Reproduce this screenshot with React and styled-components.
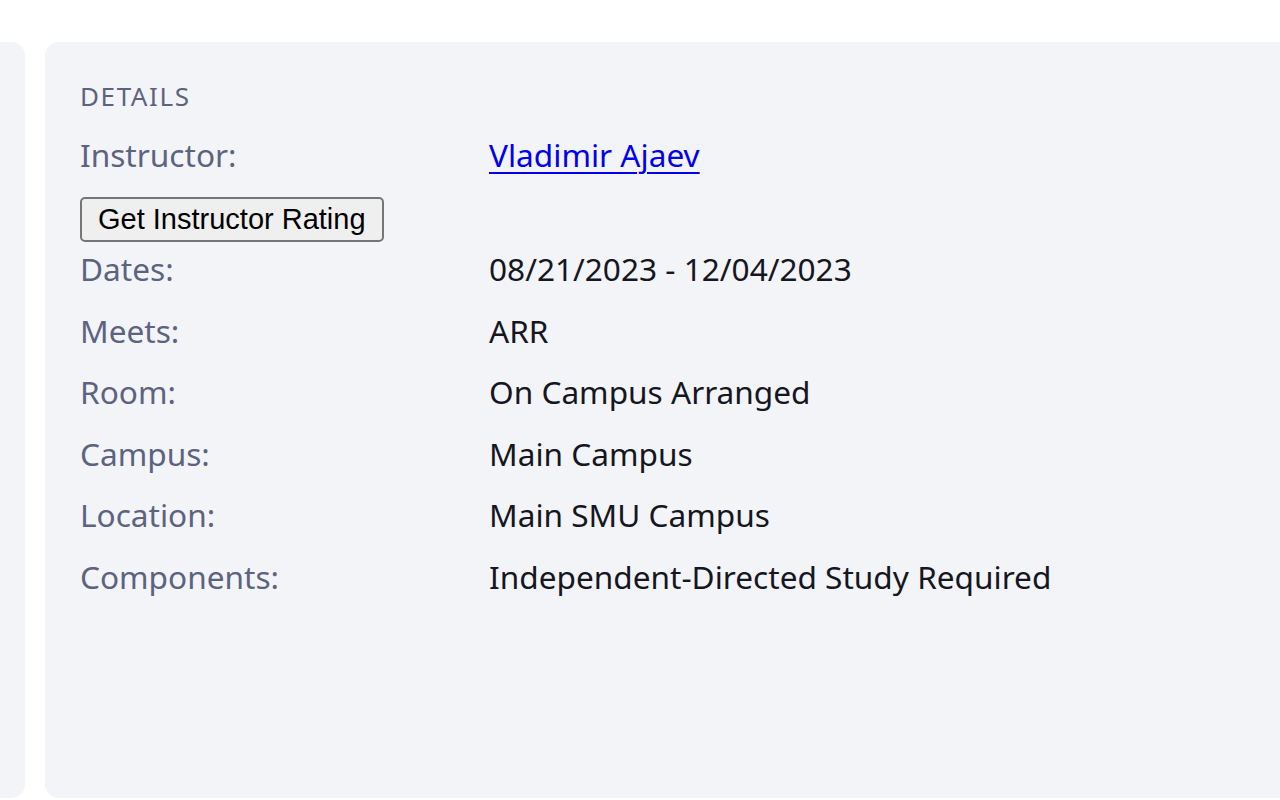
import React from 'react'
import styled, { createGlobalStyle } from 'styled-components'

const GlobalStyle = createGlobalStyle`
  html, body {
    margin: 0;
    padding: 0;
    background: #ffffff;
  }
`

const Page = styled.div`
  display: flex;
  gap: 20px;
  height: 800px;
  box-sizing: border-box;
  padding: 42px 0 2px 0;
  margin-left: -300px;
  overflow: hidden;
`

const Panel = styled.section`
  flex: ${({ grow }) => (grow ? 1 : 'none')};
  width: ${({ width }) => (width ? `${width}px` : 'auto')};
  min-width: 0;
  background: #f3f4f8;
  border-radius: 14px;
  margin-right: ${({ grow }) => (grow ? '-40px' : 0)};
  padding: 36px 35px;
  box-sizing: border-box;
  font-family: 'Noto Sans', 'Open Sans', sans-serif;
`

const Heading = styled.h3`
  margin: 0 0 20px 0;
  font-size: 26px;
  line-height: 36px;
  font-weight: 400;
  letter-spacing: 1.6px;
  color: #5b6380;
  text-transform: uppercase;
`

const Row = styled.div`
  display: grid;
  grid-template-columns: 409px 1fr;
  font-size: 31.6px;
  line-height: 42px;
  margin-bottom: ${({ tight }) => (tight ? '0' : '19.6px')};
`

const Label = styled.div`
  color: #5b6380;
`

const Value = styled.div`
  color: #15161f;
`

const InstructorLink = styled.a`
  color: #0000ee;
  text-decoration: underline;
  text-decoration-thickness: 2px;
  text-underline-offset: 5px;
`

const RatingButton = styled.button`
  align-self: flex-start;
  margin: 21px 0 6px 0;
  height: 45px;
  padding: 0 16px;
  font-family: Arial, 'Liberation Sans', sans-serif;
  font-size: 29px;
  color: #000;
  background: #efefef;
  border: 2px solid #767676;
  border-radius: 5px;
`

const Body = styled.div`
  display: flex;
  flex-direction: column;
`

const details = [
  ['Dates:', '08/21/2023 - 12/04/2023'],
  ['Meets:', 'ARR'],
  ['Room:', 'On Campus Arranged'],
  ['Campus:', 'Main Campus'],
  ['Location:', 'Main SMU Campus'],
  ['Components:', 'Independent-Directed Study Required'],
]

const App = () => {
  return (
    <>
      <GlobalStyle />
      <Page>
        <Panel width={325} />
        <Panel grow>
          <Heading>Details</Heading>
          <Body>
            <Row tight>
              <Label>Instructor:</Label>
              <Value>
                <InstructorLink href="#">Vladimir Ajaev</InstructorLink>
              </Value>
            </Row>
            <RatingButton>Get Instructor Rating</RatingButton>
            {details.map(([label, value]) => (
              <Row key={label}>
                <Label>{label}</Label>
                <Value>{value}</Value>
              </Row>
            ))}
          </Body>
        </Panel>
      </Page>
    </>
  )
}

export default App
